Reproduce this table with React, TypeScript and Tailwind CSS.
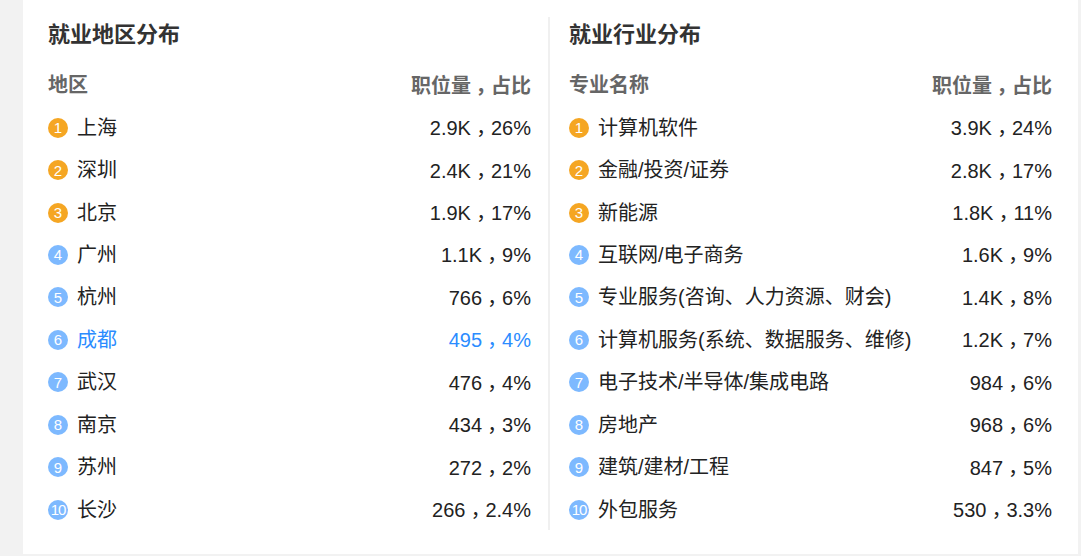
const regions: [string, string][] = [
  ["上海", "2.9K，26%"],
  ["深圳", "2.4K，21%"],
  ["北京", "1.9K，17%"],
  ["广州", "1.1K，9%"],
  ["杭州", "766，6%"],
  ["成都", "495，4%"],
  ["武汉", "476，4%"],
  ["南京", "434，3%"],
  ["苏州", "272，2%"],
  ["长沙", "266，2.4%"],
];

const industries: [string, string][] = [
  ["计算机软件", "3.9K，24%"],
  ["金融/投资/证券", "2.8K，17%"],
  ["新能源", "1.8K，11%"],
  ["互联网/电子商务", "1.6K，9%"],
  ["专业服务(咨询、人力资源、财会)", "1.4K，8%"],
  ["计算机服务(系统、数据服务、维修)", "1.2K，7%"],
  ["电子技术/半导体/集成电路", "984，6%"],
  ["房地产", "968，6%"],
  ["建筑/建材/工程", "847，5%"],
  ["外包服务", "530，3.3%"],
];

// full-width comma: TC glyph is centred, drop it to the baseline
const Val = ({ text }: { text: string }) => {
  const [a, b] = text.split("，");
  return (
    <span className="whitespace-nowrap">
      {a}
      <span className="relative top-[6px] font-['Noto_Sans_CJK_TC']">，</span>
      {b}
    </span>
  );
};

const Badge = ({ n }: { n: number }) => (
  <span
    className={`w-[20px] h-[20px] rounded-full shrink-0 flex items-center justify-center text-white text-[15px] leading-none ${
      n > 9 ? "tracking-[-1px]" : ""
    } ${n <= 3 ? "bg-[#f5a623]" : "bg-[#7db9ff]"}`}
  >
    {n}
  </span>
);

const Panel = ({
  title,
  colName,
  rows,
  active,
}: {
  title: string;
  colName: string;
  rows: [string, string][];
  active?: number;
}) => (
  <div className="w-[483px] pt-[2px]">
    <h2 className="h-[32px] leading-[32px] text-[22px] font-bold text-[#333]">
      {title}
    </h2>
    <div className="mt-[13px] h-[42.45px] flex items-center justify-between text-[20px] font-bold text-[#666]">
      <span>{colName}</span>
      <Val text="职位量，占比" />
    </div>
    {rows.map(([name, val], i) => {
      const on = active === i;
      return (
        <div
          key={name}
          className={`h-[42.45px] flex items-center justify-between text-[20px] ${
            on ? "text-[#2b8cff]" : "text-[#222]"
          }`}
        >
          <div className="flex items-center gap-[9px]">
            <Badge n={i + 1} />
            <span>{name}</span>
          </div>
          <Val text={val} />
        </div>
      );
    })}
  </div>
);

export default function App() {
  return (
    <div
      className="w-[1081px] h-[556px] bg-[#f2f2f2] pl-[23px] pr-[3px] pb-[2px]"
      style={{ fontFamily: '"Liberation Sans", Arial, "Noto Sans CJK SC", sans-serif' }}
    >
      <div className="h-full bg-white pt-[17px] pb-[24px] pl-[25px] pr-[26px] flex">
        <Panel title="就业地区分布" colName="地区" rows={regions} active={5} />
        <div className="ml-[17px] w-[2px] bg-[#f0f0f0] self-stretch" />
        <div className="ml-[19px]">
          <Panel title="就业行业分布" colName="专业名称" rows={industries} />
        </div>
      </div>
    </div>
  );
}
